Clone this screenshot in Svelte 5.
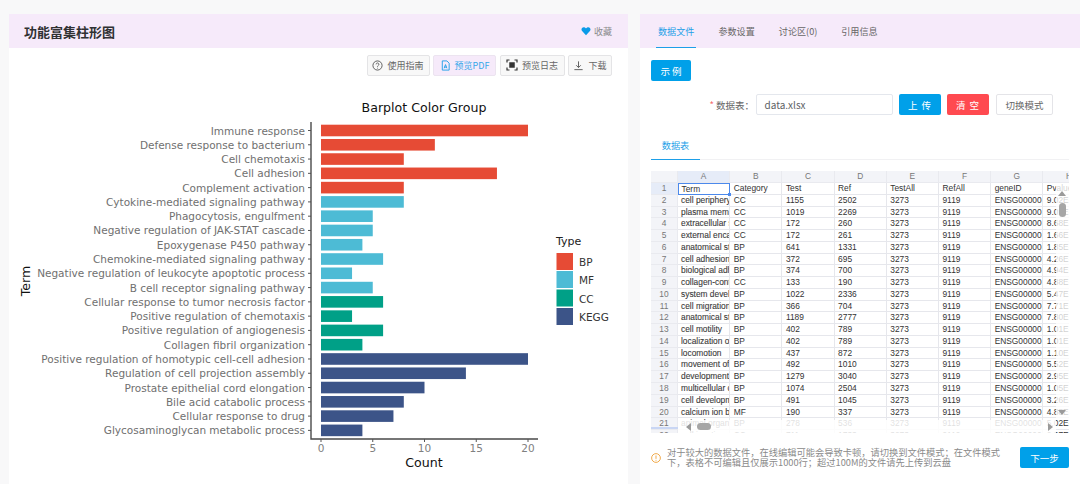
<script>
  const colors = { BP: '#e64b35', MF: '#4dbbd5', CC: '#00a087', KEGG: '#3c5488' };
  const bars = [
    ['Immune response', 20, 'BP'], ['Defense response to bacterium', 11, 'BP'], ['Cell chemotaxis', 8, 'BP'],
    ['Cell adhesion', 17, 'BP'], ['Complement activation', 8, 'BP'],
    ['Cytokine-mediated signaling pathway', 8, 'MF'], ['Phagocytosis, engulfment', 5, 'MF'],
    ['Negative regulation of JAK-STAT cascade', 5, 'MF'], ['Epoxygenase P450 pathway', 4, 'MF'],
    ['Chemokine-mediated signaling pathway', 6, 'MF'], ['Negative regulation of leukocyte apoptotic process', 3, 'MF'],
    ['B cell receptor signaling pathway', 5, 'MF'],
    ['Cellular response to tumor necrosis factor', 6, 'CC'], ['Positive regulation of chemotaxis', 3, 'CC'],
    ['Positive regulation of angiogenesis', 6, 'CC'], ['Collagen fibril organization', 4, 'CC'],
    ['Positive regulation of homotypic cell-cell adhesion', 20, 'KEGG'], ['Regulation of cell projection assembly', 14, 'KEGG'],
    ['Prostate epithelial cord elongation', 10, 'KEGG'], ['Bile acid catabolic process', 8, 'KEGG'],
    ['Cellular response to drug', 7, 'KEGG'], ['Glycosaminoglycan metabolic process', 4, 'KEGG']
  ];
  const x0 = 321, unit = 10.35, y0 = 130.5, step = 14.28;
  const legend = [['BP', 253], ['MF', 271], ['CC', 289.5], ['KEGG', 308]];

  const columns = ['A', 'B', 'C', 'D', 'E', 'F', 'G', 'H'];
  const data = [
    ['Term', 'Category', 'Test', 'Ref', 'TestAll', 'RefAll', 'geneID', 'Pvalue'],
    ['cell periphery', 'CC', '1155', '2502', '9.02E-30'],
    ['plasma membrane', 'CC', '1019', '2269', '9.02E-26'],
    ['extracellular space', 'CC', '172', '260', '8.68E-25'],
    ['external encapsulating', 'CC', '172', '261', '1.66E-24'],
    ['anatomical structure', 'BP', '641', '1331', '1.85E-24'],
    ['cell adhesion', 'BP', '372', '695', '4.26E-24'],
    ['biological adhesion', 'BP', '374', '700', '4.94E-24'],
    ['collagen-containing', 'CC', '133', '190', '4.88E-23'],
    ['system development', 'BP', '1022', '2336', '5.47E-23'],
    ['cell migration', 'BP', '366', '704', '7.71E-23'],
    ['anatomical structure', 'BP', '1189', '2777', '7.80E-23'],
    ['cell motility', 'BP', '402', '789', '1.01E-22'],
    ['localization of cell', 'BP', '402', '789', '1.01E-22'],
    ['locomotion', 'BP', '437', '872', '1.10E-22'],
    ['movement of cell', 'BP', '492', '1010', '5.52E-22'],
    ['developmental process', 'BP', '1279', '3040', '2.95E-21'],
    ['multicellular organism', 'BP', '1074', '2504', '1.05E-20'],
    ['cell development', 'BP', '491', '1045', '3.26E-20'],
    ['calcium ion binding', 'MF', '190', '337', '4.88E-20'],
    ['animal organ development', 'BP', '278', '536', '5.02E-20'],
    ['cell junction', 'CC', '711', '1733', '2.97E-19']
  ].map((r, i) => (i === 0 ? r : [r[0], r[1], r[2], r[3], '3273', '9119', 'ENSG00000123456', r[4]]));
</script>

<div class="page">
  <section class="panel left">
    <header class="head">
      <h1>功能富集柱形图</h1>
      <span class="fav">
        <svg width="10" height="10" viewBox="0 0 24 24"><path fill="#0a9be8" d="M12 22 2.6 12.2C-.4 9 1.4 3 6.6 3 9 3 11 4.400 12 6.200 13 4.400 15 3 17.400 3c5.200 0 7 6 4 9.200z"/></svg>
        收藏
      </span>
    </header>

    <div class="tools">
      <button class="tool">
        <svg width="11" height="11" viewBox="0 0 24 24" fill="none" stroke="#555" stroke-width="2"><circle cx="12" cy="12" r="10"/><path d="M9 9.500a3 3 0 1 1 4.500 2.600c-1 .6-1.500 1.200-1.500 2.400"/><path d="M12 17v1.500"/></svg>
        使用指南
      </button>
      <button class="tool active">
        <svg width="11" height="11" viewBox="0 0 24 24" fill="none" stroke="#1d9fe8" stroke-width="2"><path d="M5 2h10l5 5v15H5z"/><path d="M9 18l3-8 3 8M10 15.500h4"/></svg>
        预览PDF
      </button>
      <button class="tool">
        <svg width="12" height="12" viewBox="0 0 24 24" fill="none" stroke="#333" stroke-width="2.400"><rect x="6.500" y="6.500" width="11" height="11" fill="#333" stroke="none"/><path d="M2 7V2h5M17 2h5v5M22 17v5h-5M7 22H2v-5"/></svg>
        预览日志
      </button>
      <button class="tool">
        <svg width="11" height="11" viewBox="0 0 24 24" fill="none" stroke="#555" stroke-width="2"><path d="M12 3v13M7 11.500l5 5 5-5M3 21h18"/></svg>
        下载
      </button>
    </div>

    <svg class="chart" viewBox="9 78 619 406" width="619" height="406">
      <text x="424" y="112" class="title" text-anchor="middle">Barplot Color Group</text>

      {#each bars as b, i}
        <rect x={x0} y={y0 + i * step - 5.8} width={b[1] * unit} height="11.6" fill={colors[b[2]]} />
        <line x1="308" x2="311" y1={y0 + i * step} y2={y0 + i * step} stroke="#555" />
        <text x="305" y={y0 + i * step + 4} class="ylab" text-anchor="end">{b[0]}</text>
      {/each}

      <path d="M311 122V439H538" fill="none" stroke="#4a4a4a" stroke-width="1.400" />
      {#each [0, 5, 10, 15, 20] as t}
        <line x1={x0 + t * unit} x2={x0 + t * unit} y1="439" y2="442" stroke="#555" />
        <text x={x0 + t * unit} y="452" class="xlab" text-anchor="middle">{t}</text>
      {/each}

      <text x="424" y="467" class="title" text-anchor="middle">Count</text>
      <text transform="translate(30 281) rotate(-90)" class="title" text-anchor="middle">Term</text>

      <text x="556" y="245" class="ltitle">Type</text>
      {#each legend as l}
        <rect x="556.500" y={l[1]} width="16.500" height="17" fill={colors[l[0]]} />
        <text x="579" y={l[1] + 13} class="ltext">{l[0]}</text>
      {/each}
    </svg>
  </section>

  <section class="panel right">
    <nav class="head tabs">
      <span class="tab on">数据文件</span>
      <span class="tab">参数设置</span>
      <span class="tab">讨论区(0)</span>
      <span class="tab">引用信息</span>
    </nav>

    <div class="body">
      <button class="btn blue sample">示 例</button>

      <div class="form">
        <label><i>*</i> 数据表：</label>
        <div class="input">data.xlsx</div>
        <button class="btn blue wide">上 传</button>
        <button class="btn red wide">清 空</button>
        <button class="btn plain">切换模式</button>
      </div>

      <div class="subtabs"><span>数据表</span></div>

      <div class="sheet">
        <div class="grid">
          <div class="ch corner"></div>
          {#each columns as c, i}
            <div class="ch" class:sel={i === 0}>{c}</div>
          {/each}
          {#each data as row, r}
            <div class="rh" class:sel={r === 0}>{r + 1}</div>
            {#each row as cell, c}
              <div class="cell" class:active={r === 0 && c === 0} class:term={r > 0 && c === 0}>{cell}</div>
            {/each}
          {/each}
        </div>

        <div class="vbar">
          <span class="up"></span>
          <span class="vthumb"></span>
          <span class="down"></span>
        </div>
        <div class="hbar">
          <span class="mark"></span>
          <span class="leftarrow"></span>
          <span class="hthumb"></span>
          <span class="rightarrow"></span>
        </div>
      </div>

      <div class="foot">
        <svg class="info" width="10" height="10" viewBox="0 0 24 24" fill="none" stroke="#f0a33c" stroke-width="2.200"><circle cx="12" cy="12" r="10.500"/><path d="M12 6v8M12 16.500v2"/></svg>
        <p>对于较大的数据文件，在线编辑可能会导致卡顿，请切换到文件模式；在文件模式<br />下，表格不可编辑且仅展示1000行；超过100M的文件请先上传到云盘</p>
        <button class="btn blue next">下一步</button>
      </div>
    </div>
  </section>
</div>

<style>
  :global(body) {
    margin: 0;
    background: #f8f8f9;
    font-family: "Noto Sans CJK SC", "Noto Sans", sans-serif;
  }
  .page {
    display: flex;
    gap: 12px;
    height: 484px;
    padding: 14px 0 0 9px;
    box-sizing: border-box;
    overflow: hidden;
  }
  .panel {
    background: #fff;
    display: flex;
    flex-direction: column;
    border-radius: 2px 2px 0 0;
  }
  .left { width: 619px; }
  .right { flex: 1; min-width: 0; }
  .head {
    height: 34px;
    flex: none;
    background: #f6eafa;
    display: flex;
    align-items: center;
    padding: 0 16px 0 15px;
    box-sizing: border-box;
  }
  .left .head { justify-content: space-between; }
  h1 {
    margin: 0;
    font-size: 13px;
    font-weight: 700;
    color: #303133;
  }
  .fav {
    display: flex;
    align-items: center;
    gap: 3px;
    font-size: 9px;
    color: #8a8a8a;
  }
  .tools {
    display: flex;
    justify-content: flex-end;
    gap: 3.500px;
    padding: 7px 16px 0 0;
    height: 21px;
    flex: none;
  }
  .tool {
    display: flex;
    align-items: center;
    justify-content: center;
    gap: 4px;
    height: 20.500px;
    padding: 0;
    width: 44px;
    white-space: nowrap;
    border: 1px solid #e4e4e6;
    border-radius: 2px;
    background: #f8f8f8;
    color: #666;
    font: 9px "Noto Sans CJK SC", sans-serif;
    box-sizing: border-box;
  }
  .tool:nth-child(1) { width: 63px; }
  .tool:nth-child(2) { width: 63px; }
  .tool:nth-child(3) { width: 65px; }
  .tool.active {
    background: #f6eafa;
    color: #35a7ea;
    border-color: #ece4f0;
  }
  .chart {
    display: block;
    flex: none;
    margin-top: 2px;
    font-family: "DejaVu Sans", sans-serif;
  }
  .title { font-size: 12.600px; fill: #111; }
  .ylab { font-size: 10.500px; fill: #707070; }
  .xlab { font-size: 10.500px; fill: #808080; }
  .ltitle { font-size: 11px; fill: #222; }
  .ltext { font-size: 10.500px; fill: #333; }

  .tabs {
    padding: 0 0 0 16px;
    gap: 20px;
    align-items: stretch;
  }
  .tab {
    position: relative;
    padding: 0 2px;
    font-size: 9.100px;
    line-height: 34px;
    color: #666;
  }
  .tab.on { color: #1d9fe8; }
  .tab.on::after {
    content: "";
    position: absolute;
    left: 0;
    right: 0;
    bottom: 0;
    height: 1.500px;
    background: #1d9fe8;
  }
  .body {
    padding: 12px 11px 0;
    display: flex;
    flex-direction: column;
    flex: 1;
  }
  .btn {
    border: 0;
    border-radius: 2px;
    font: 9.500px "Noto Sans CJK SC", sans-serif;
    height: 21px;
    padding: 0;
    box-sizing: border-box;
  }
  .blue { background: #00a0e9; color: #fff; }
  .red { background: #ff4a50; color: #fff; }
  .plain { background: #fff; color: #666; border: 1px solid #e4e4e8; width: 57px; margin-left: 1px; }
  .sample { width: 40px; }
  .form {
    display: flex;
    align-items: center;
    gap: 6px;
    margin-top: 13px;
    padding-left: 58.500px;
  }
  label {
    font-size: 9.500px;
    color: #666;
    width: 40px;
    white-space: nowrap;
  }
  label i { color: #f56c6c; font-style: normal; }
  .input {
    width: 137.500px;
    height: 21px;
    line-height: 19px;
    border: 1px solid #e4e7ed;
    border-radius: 2px;
    box-sizing: border-box;
    padding-left: 8px;
    font-size: 10px;
    color: #606266;
  }
  .wide { width: 42px; letter-spacing: 1px; }
  .subtabs {
    margin-top: 15px;
    height: 30px;
    border-bottom: 1px solid #f1f1f3;
    flex: none;
    box-sizing: border-box;
  }
  .subtabs span {
    display: block;
    width: 49px;
    height: 30px;
    box-sizing: border-box;
    text-align: center;
    font-size: 9.200px;
    line-height: 30px;
    color: #1d9fe8;
    border-bottom: 1.500px solid #1d9fe8;
  }
  .sheet {
    position: relative;
    margin-top: 11px;
    height: 262px;
    width: 418px;
    overflow: hidden;
    flex: none;
  }
  .grid {
    display: grid;
    grid-template-columns: 27px repeat(8, 52.200px);
    grid-template-rows: 12px;
    grid-auto-rows: 11.780px;
    font-family: "Liberation Sans", Arial, sans-serif;
    font-size: 8.400px;
    width: 445px;
  }
  .ch, .rh {
    background: #f3f4f8;
    color: #777;
    text-align: center;
    line-height: 11.500px;
    border-right: 1px solid #e9eaef;
    border-bottom: 1px solid #e9eaef;
    box-sizing: border-box;
  }
  .sel { background: #e6ecf8; }
  .cell {
    color: #333;
    line-height: 11px;
    padding-left: 3.500px;
    white-space: nowrap;
    overflow: hidden;
    border-right: 1px solid #e6e7ec;
    border-bottom: 1px solid #e6e7ec;
    box-sizing: border-box;
  }
  .term { padding-left: 3px; color: #3a3a3a; -webkit-text-stroke: .1px #3a3a3a; }
  .cell.active {
    border: 1px solid #4b89ec;
    position: relative;
    overflow: visible;
    padding-left: 2.500px;
    line-height: 10px;
  }
  .cell.active::after {
    content: "";
    position: absolute;
    right: -2px;
    bottom: -2px;
    width: 3px;
    height: 3px;
    background: #4b89ec;
  }
  .vbar {
    position: absolute;
    right: 0;
    top: 12px;
    bottom: 13px;
    width: 13px;
    background: rgba(255, 255, 255, .78);
  }
  .up, .down, .leftarrow, .rightarrow {
    position: absolute;
    width: 0;
    height: 0;
  }
  .up {
    left: 2px;
    top: 8px;
    border: 4px solid transparent;
    border-top: 0;
    border-bottom: 5px solid #9a9a9a;
  }
  .down {
    left: 2px;
    bottom: 5px;
    border: 4px solid transparent;
    border-bottom: 0;
    border-top: 5px solid #9a9a9a;
  }
  .vthumb {
    position: absolute;
    left: 3px;
    top: 20px;
    width: 7px;
    height: 14px;
    border-radius: 4px;
    background: #a6a6a6;
  }
  .hbar {
    position: absolute;
    left: 27px;
    right: 13px;
    bottom: 0;
    height: 13px;
    background: rgba(255, 255, 255, .85);
  }
  .mark {
    position: absolute;
    left: -27px;
    top: 7px;
    width: 27px;
    height: 2px;
    background: #c9d6f4;
  }
  .leftarrow {
    left: 8px;
    top: 3px;
    border: 4px solid transparent;
    border-left: 0;
    border-right: 5px solid #9a9a9a;
  }
  .rightarrow {
    right: 3px;
    top: 3px;
    border: 4px solid transparent;
    border-right: 0;
    border-left: 5px solid #9a9a9a;
  }
  .hthumb {
    position: absolute;
    left: 19px;
    top: 3px;
    width: 14px;
    height: 7px;
    border-radius: 4px;
    background: #a6a6a6;
  }
  .foot {
    display: flex;
    align-items: center;
    margin-top: 14px;
  }
  .info { flex: none; margin: 0 6px 0 0; }
  .foot p {
    margin: 0;
    font-size: 9.250px;
    line-height: 9.500px;
    color: #8a8a8a;
    white-space: nowrap;
    flex: none;
  }
  .next {
    width: 49px;
    margin-left: auto;
  }
</style>
